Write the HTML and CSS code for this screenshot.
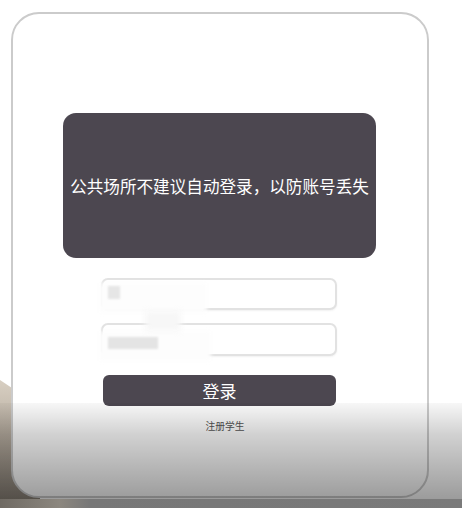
FILE: index.html
```html
<!DOCTYPE html>
<html lang="zh-CN">
<head>
<meta charset="utf-8">
<title>登录</title>
<link rel="stylesheet" href="styles.css">
</head>
<body>
<div class="stage">
  <div class="backdrop"></div>
  <div class="card">
    <div class="notice">公共场所不建议自动登录，以防账号丢失</div>
    <div class="field">
      <span class="blur b1w"></span>
      <span class="blur b1"></span>
    </div>
    <div class="field second">
      <span class="blur b2w"></span>
      <span class="blur b2t"></span>
      <span class="blur b2"></span>
    </div>
    <button class="login" type="button">登录</button>
    <a class="register">注册学生</a>
  </div>
  <div class="shade"></div>
  <div class="foot"></div>
</div>
</body>
</html>
```

FILE: styles.css
```css
html, body {
  margin: 0;
  padding: 0;
  background: #ffffff;
  font-family: "Noto Sans CJK SC", "Noto Sans", "DejaVu Sans", sans-serif;
}

.stage {
  position: relative;
  width: 462px;
  height: 508px;
  overflow: hidden;
  padding-top: 12px;
  box-sizing: border-box;
}

.backdrop {
  position: absolute;
  left: 0;
  top: 380px;
  width: 40px;
  height: 128px;
  background: linear-gradient(to bottom, #d8cfc2 0%, #b9afa2 40%, #857d73 100%);
  clip-path: polygon(0 0, 30% 8px, 100% 8px, 100% 100%, 0 100%);
}

.card {
  position: relative;
  margin-left: 11px;
  width: 418px;
  height: 486px;
  box-sizing: border-box;
  border: 2px solid #cbcbcb;
  border-radius: 28px;
  background: #ffffff;
  display: flex;
  flex-direction: column;
  align-items: center;
  padding-top: 99px;
}

.notice {
  width: 313px;
  height: 145px;
  margin-left: -1px;
  background: #4c4750;
  border-radius: 13px;
  color: #ffffff;
  font-size: 16.6px;
  display: flex;
  align-items: center;
  justify-content: center;
  white-space: nowrap;
}

.field {
  position: relative;
  width: 236px;
  height: 32px;
  box-sizing: border-box;
  margin-top: 20px;
  margin-left: -2px;
  border: 2px solid #e2e2e2;
  border-radius: 7px;
  background: #ffffff;
  box-shadow: 0 1px 2px rgba(0,0,0,0.06);
}

.field.second {
  margin-top: 13px;
  height: 33px;
}

.blur {
  position: absolute;
  display: block;
}

.b1 {
  left: 5px;
  top: 6px;
  width: 12px;
  height: 13px;
  background: #e6e6e6;
  filter: blur(1px);
}

.b1w {
  left: -4px;
  top: 3px;
  width: 108px;
  height: 30px;
  background: #fdfdfd;
  filter: blur(2px);
}

.b2 {
  left: 5px;
  top: 12px;
  width: 50px;
  height: 12px;
  background: #e4e4e4;
  filter: blur(1px);
}

.b2w {
  left: -4px;
  top: 6px;
  width: 112px;
  height: 30px;
  background: #fdfdfd;
  filter: blur(2px);
}

.b2t {
  left: 42px;
  top: -14px;
  width: 36px;
  height: 20px;
  background: #f7f7f7;
  filter: blur(3px);
}

.login {
  margin-top: 19px;
  width: 233px;
  height: 31px;
  margin-left: -1px;
  border: none;
  border-radius: 6px;
  background: #4c4750;
  color: #ffffff;
  font-family: inherit;
  font-size: 17px;
  padding: 0;
  line-height: 31px;
  cursor: pointer;
}

.register {
  margin-top: 12px;
  margin-left: 10px;
  font-size: 9.8px;
  color: #555555;
  line-height: 16px;
}

.shade {
  position: absolute;
  left: 0;
  top: 403px;
  width: 462px;
  height: 105px;
  background: linear-gradient(to bottom, rgba(0,0,0,0.03) 0%, rgba(0,0,0,0.18) 30%, rgba(0,0,0,0.42) 100%);
  pointer-events: none;
}

.foot {
  position: absolute;
  left: 0;
  top: 499px;
  width: 462px;
  height: 9px;
  background: linear-gradient(to right, #6f6a63 0, #8c877f 60px, #777777 90px, #7a7a7a 100%);
}
```
